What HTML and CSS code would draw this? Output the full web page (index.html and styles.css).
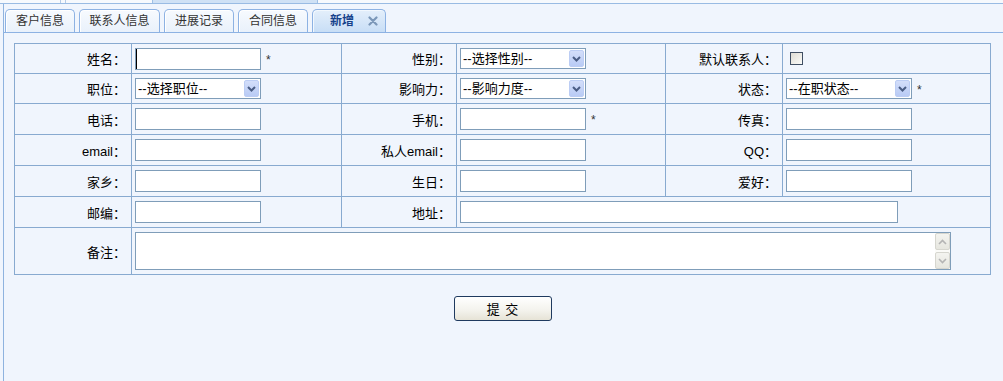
FILE: index.html
```html
<!DOCTYPE html>
<html lang="zh-CN">
<head>
<meta charset="utf-8">
<title>新增联系人</title>
<link rel="stylesheet" href="styles.css">
</head>
<body>
<div class="topstrip"><span class="frag1"></span><span class="frag2"></span></div>
<div class="panel">
  <div class="tabs">
    <span class="tab w70">客户信息</span>
    <span class="tab w81">联系人信息</span>
    <span class="tab w70">进展记录</span>
    <span class="tab w70">合同信息</span>
    <span class="tab active">新增<span class="close"><svg width="10" height="10" viewBox="0 0 10 10"><path d="M1.5 1.5l7 7M8.5 1.5l-7 7" stroke="#7b97b8" stroke-width="2.2" stroke-linecap="round"/></svg></span></span>
  </div>
  <div class="content">
    <form class="grid">
      <div class="lbl">姓名：</div>
      <div class="fld"><input class="txt cursor" type="text"><span class="req">*</span></div>
      <div class="lbl">性别：</div>
      <div class="fld"><span class="sel"><select><option>--选择性别--</option></select><span class="dd"><svg width="9" height="6" viewBox="0 0 9 6"><path d="M1 1l3.5 3.5L8 1" fill="none" stroke="#4a5d85" stroke-width="2"/></svg></span></span></div>
      <div class="lbl">默认联系人：</div>
      <div class="fld"><input class="chk" type="checkbox"></div>

      <div class="lbl">职位：</div>
      <div class="fld"><span class="sel"><select><option>--选择职位--</option></select><span class="dd"><svg width="9" height="6" viewBox="0 0 9 6"><path d="M1 1l3.5 3.5L8 1" fill="none" stroke="#4a5d85" stroke-width="2"/></svg></span></span></div>
      <div class="lbl">影响力：</div>
      <div class="fld"><span class="sel"><select><option>--影响力度--</option></select><span class="dd"><svg width="9" height="6" viewBox="0 0 9 6"><path d="M1 1l3.5 3.5L8 1" fill="none" stroke="#4a5d85" stroke-width="2"/></svg></span></span></div>
      <div class="lbl">状态：</div>
      <div class="fld"><span class="sel"><select><option>--在职状态--</option></select><span class="dd"><svg width="9" height="6" viewBox="0 0 9 6"><path d="M1 1l3.5 3.5L8 1" fill="none" stroke="#4a5d85" stroke-width="2"/></svg></span></span><span class="req">*</span></div>

      <div class="lbl">电话：</div>
      <div class="fld"><input class="txt" type="text"></div>
      <div class="lbl">手机：</div>
      <div class="fld"><input class="txt" type="text"><span class="req">*</span></div>
      <div class="lbl">传真：</div>
      <div class="fld"><input class="txt" type="text"></div>

      <div class="lbl">email：</div>
      <div class="fld"><input class="txt" type="text"></div>
      <div class="lbl">私人email：</div>
      <div class="fld"><input class="txt" type="text"></div>
      <div class="lbl">QQ：</div>
      <div class="fld"><input class="txt" type="text"></div>

      <div class="lbl">家乡：</div>
      <div class="fld"><input class="txt" type="text"></div>
      <div class="lbl">生日：</div>
      <div class="fld"><input class="txt" type="text"></div>
      <div class="lbl">爱好：</div>
      <div class="fld"><input class="txt" type="text"></div>

      <div class="lbl">邮编：</div>
      <div class="fld"><input class="txt" type="text"></div>
      <div class="lbl">地址：</div>
      <div class="fld span3"><input class="txt wide" type="text"></div>

      <div class="lbl">备注：</div>
      <div class="fld span5"><span class="ta"><textarea></textarea><span class="sb"><span class="sbtn"><svg width="9" height="6" viewBox="0 0 9 6"><path d="M1 5l3.5-3.5L8 5" fill="none" stroke="#b4b4b4" stroke-width="1.6"/></svg></span><span class="sbtn"><svg width="9" height="6" viewBox="0 0 9 6"><path d="M1 1l3.5 3.5L8 1" fill="none" stroke="#b4b4b4" stroke-width="1.6"/></svg></span></span></span></div>
    </form>
    <div class="actions"><button class="submit" type="button">提 交</button></div>
  </div>
</div>
</body>
</html>
```

FILE: styles.css
```css
html, body {
  margin: 0;
  padding: 0;
}
body {
  background: #f0f5fd;
  font-family: "Liberation Sans", "Noto Sans CJK SC", sans-serif;
  font-size: 13px;
  color: #000;
  width: 1003px;
  height: 381px;
  overflow: hidden;
}

/* top strip */
.topstrip {
  height: 3px;
  border-bottom: 1px solid #99bbe3;
  display: flex;
  background: #f6f9fd;
}
.frag1 {
  margin-left: 60px;
  width: 4px;
  border-left: 1px solid #b5cbe6;
  border-right: 1px solid #b5cbe6;
}
.frag2 {
  margin-left: 86px;
  width: 164px;
  background: #cfe1f5;
  border-left: 1px solid #9fc0e6;
  border-right: 1px solid #9fc0e6;
}

/* panel */
.panel {
  margin-left: 3px;
  border-left: 1px solid #8fb3df;
  height: 377px;
}

.tabs {
  height: 28px;
  display: flex;
  align-items: flex-end;
  gap: 4px;
  padding-left: 1px;
  border-bottom: 1px solid #8db2e3;
}
.tab {
  box-sizing: border-box;
  height: 23px;
  line-height: 22px;
  font-size: 12px;
  color: #333;
  text-align: center;
  border: 1px solid #8db2e3;
  border-bottom: none;
  border-radius: 5px 5px 0 0;
  background: linear-gradient(#f7fafe, #e9f1fb);
  box-shadow: inset 1px 1px 0 #ffffff;
}
.w70 { width: 70px; }
.w81 { width: 81px; }
.tab.active {
  width: 74px;
  display: flex;
  align-items: center;
  padding-left: 17px;
  font-weight: bold;
  color: #15428b;
  background: linear-gradient(#e4effb, #c8def6);
  box-shadow: inset 1px 1px 0 #f2f8fe;
}
.close {
  margin-left: 14px;
  display: flex;
  align-items: center;
}

/* content */
.content {
  padding: 10px 0 0 10px;
}
.grid {
  display: grid;
  grid-template-columns: 116px 209px 114px 208px 116px 207px;
  grid-template-rows: 29px 29px 30px 30px 30px 30px 46px;
  gap: 1px;
  width: max-content;
  background: #88aad0;
  border: 1px solid #88aad0;
  margin: 0;
}
.lbl {
  background: #f0f5fd;
  display: flex;
  justify-content: flex-end;
  align-items: center;
  padding-right: 5px;
  white-space: nowrap;
}
.fld {
  background: #f0f5fd;
  display: flex;
  align-items: center;
  padding-left: 3px;
}
.span3 { grid-column: span 3; }
.span5 { grid-column: span 5; }

.txt {
  box-sizing: border-box;
  width: 126px;
  height: 22px;
  border: 1px solid #7f9db9;
  background: #fff;
  margin: 0;
  padding: 0 2px;
  font: inherit;
}
.txt.wide { width: 438px; }
.cursor {
  border-left: 1px solid #7f9db9;
  box-shadow: inset 2px 0 0 -1px #000;
}
.req {
  margin-left: 5px;
  font-size: 12px;
  color: #333;
  position: relative;
  top: 1px;
}

.sel {
  position: relative;
  display: inline-block;
  width: 126px;
  height: 21px;
}
.sel select {
  appearance: none;
  -webkit-appearance: none;
  box-sizing: border-box;
  width: 126px;
  height: 21px;
  border: 1px solid #7f9db9;
  background: #fff;
  font: inherit;
  color: #000;
  padding: 0 0 0 2px;
  margin: 0;
}
.dd {
  position: absolute;
  top: 2px;
  right: 2px;
  width: 15px;
  height: 17px;
  box-sizing: border-box;
  border: 1px solid #bccdf4;
  border-radius: 2px;
  background: linear-gradient(#d3defa, #b9cbf5);
  display: flex;
  align-items: center;
  justify-content: center;
  pointer-events: none;
}

.chk {
  appearance: none;
  -webkit-appearance: none;
  width: 13px;
  height: 13px;
  margin: 0 0 0 4px;
  box-sizing: border-box;
  border: 1px solid #3f4e63;
  background: linear-gradient(135deg, #dedbd3, #fbfbf9);
}

.ta {
  position: relative;
  display: inline-block;
  width: 816px;
  height: 38px;
}
.ta textarea {
  box-sizing: border-box;
  display: block;
  width: 816px;
  height: 38px;
  border: 1px solid #7f9db9;
  background: #fff;
  resize: none;
  overflow: hidden;
  margin: 0;
  font: inherit;
}
.sb {
  position: absolute;
  top: 1px;
  right: 1px;
  bottom: 1px;
  width: 15px;
  display: flex;
  flex-direction: column;
  justify-content: space-between;
  background: #fbfbf8;
}
.sbtn {
  box-sizing: border-box;
  height: 17px;
  border: 1px solid #d6d6cf;
  border-radius: 2px;
  background: linear-gradient(#f4f4f0, #e6e6df);
  display: flex;
  align-items: center;
  justify-content: center;
}

.actions {
  width: 977px;
  display: flex;
  justify-content: center;
  padding-top: 21px;
}
.submit {
  box-sizing: border-box;
  width: 98px;
  height: 25px;
  border: 1px solid #1f3a5f;
  border-radius: 3px;
  background: linear-gradient(#ffffff, #f3f2ec 60%, #e6e3d6);
  font-family: "Liberation Sans", "Noto Sans CJK SC", sans-serif;
  font-size: 13px;
  color: #000;
  padding: 0;
  word-spacing: 2px;
}
```
